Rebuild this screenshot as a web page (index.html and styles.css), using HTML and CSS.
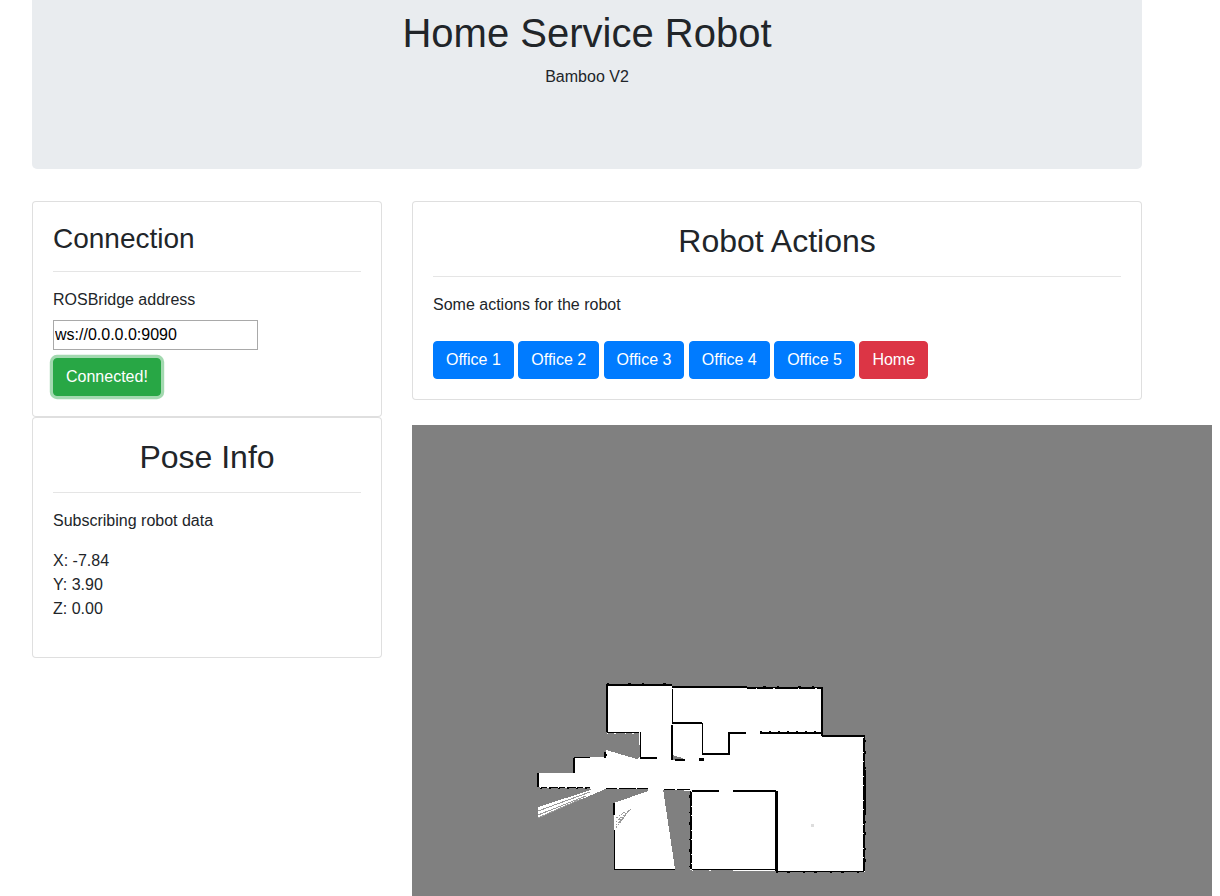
FILE: index.html
```html
<!DOCTYPE html>
<html>
<head>
<meta charset="utf-8">
<title>Home Service Robot</title>
<link rel="stylesheet" href="styles.css">
</head>
<body>
<div class="page">
  <header class="jumbotron">
    <h1>Home Service Robot</h1>
    <p>Bamboo V2</p>
  </header>
  <div class="row">
    <div class="leftCol">
      <section class="card connection">
        <h3>Connection</h3>
        <hr>
        <label for="address">ROSBridge address</label>
        <input id="address" type="text" value="ws://0.0.0.0:9090">
        <button class="btn btnGreen">Connected!</button>
      </section>
      <section class="card pose">
        <h3 class="large center">Pose Info</h3>
        <hr>
        <p>Subscribing robot data</p>
        <div class="coords">
          <div>X: -7.84</div>
          <div>Y: 3.90</div>
          <div>Z: 0.00</div>
        </div>
      </section>
    </div>
    <div class="rightCol">
      <section class="card actions">
        <h3 class="large center">Robot Actions</h3>
        <hr>
        <p>Some actions for the robot</p>
        <div class="buttons">
          <button class="btn btnBlue">Office 1</button>
          <button class="btn btnBlue">Office 2</button>
          <button class="btn btnBlue">Office 3</button>
          <button class="btn btnBlue">Office 4</button>
          <button class="btn btnBlue">Office 5</button>
          <button class="btn btnRed">Home</button>
        </div>
      </section>
      <div class="mapBox">
        <svg class="map" width="800" height="471" viewBox="412 425 800 471" shape-rendering="crispEdges">
          <!-- free space -->
          <path fill="#fff" d="M607 684 L672 684 L672 686 L822 687 L822 736 L865 736 L865 872 L776 871 L690 870 L691 791 L663 789 L675 869 L614 869 L614 803 L648 791 L648 789 L605 788 L603 790 L538 818 L538 807 L591 790 L590 787 L538 787 L537 773 L573 773 L573 758 L605 757 L606 750 L637 759 L640 757 L639 732 L607 732 Z"/>
          <!-- unknown patch inside the small room -->
          <path fill="#808080" d="M672 755 L683 758 L683 760 L672 760 Z"/>
          <path fill="#808080" d="M640 757 L657 757 L657 759 L640 759 Z"/>
          <!-- laser streaks -->
          <g fill="none" stroke="#9a9a9a" stroke-width="1">
            <path d="M538 811 L590 792 M538 815 L586 796 M538 818 L581 799"/>
            <path stroke-dasharray="2 1" d="M616 822 L632 808 M616 825 L630 810 M616 828 L627 813 M616 818 L625 812"/>
          </g>
          <!-- walls -->
          <g fill="none" stroke="#000" stroke-width="1">
            <path d="M607 732 L639 732 M640 732 L640 757"/>
            <path d="M672 686 L672 722"/>
            <path d="M702 723 L702 753"/>
            <path d="M614 830 L614 869 L675 869"/>
            <path d="M692 869 L776 869"/>
            <path d="M540 787 L590 787 M574 757 L590 757 M605 788 L648 788 M663 789 L690 789"/>
            <path d="M776 871 L864 871"/>
          </g>
          <g fill="none" stroke="#000" stroke-width="2">
            <path d="M607 685 L672 685"/>
            <path d="M607 684 L607 732"/>
            <path d="M672 687 L822 688 L822 736"/>
            <path d="M672 723 L702 723"/>
            <path d="M702 754 L729 754 L729 733 L746 733 M760 733 L822 733"/>
            <path d="M672 725 L672 760"/>
            <path d="M640 758 L657 758 M675 760 L685 760 M604 755 L607 755"/>
            <path d="M822 736 L864 736 L864 871"/>
            <path d="M691 791 L691 869 M692 791 L719 791 M733 791 L776 791"/>
            <path d="M574 758 L574 773 M538 773 L538 787 M614 803 L614 815 M605 752 L605 758"/>
          </g>
          <g fill="none" stroke="#000" stroke-width="3">
            <path d="M776 791 L776 871"/>
            <path d="M864 770 L864 815"/>
            <path d="M699 759 L704 759"/>
          </g>
          <!-- speckled wall edges -->
          <g fill="none" stroke="#fff" stroke-width="1">
            <path stroke-dasharray="1 6 2 9" d="M607 733 L639 733 M540 787 L590 787"/>
            <path stroke-dasharray="1 11 2 17" d="M605 788 L648 788 M663 789 L690 789"/>
            <path stroke-dasharray="1 16 2 23" d="M692 870 L776 870 M672 688 L822 689"/>
            <path stroke-dasharray="1 14 1 8" d="M863 737 L863 871 M691 791 L691 869"/>
            <path stroke-dasharray="1 9" d="M692 792 L719 792 M733 792 L776 792 M760 734 L822 734"/>
          </g>
          <g fill="none" stroke="#000" stroke-width="1">
            <path stroke-dasharray="2 19 3 11" d="M607 683 L672 683 M672 686 L822 686"/>
            <path stroke-dasharray="3 14 1 9" d="M606 690 L606 730 M689 795 L689 868"/>
            <path stroke-dasharray="2 9 3 13" d="M776 872 L864 872 M865 740 L865 870"/>
            <path stroke-dasharray="2 7" d="M540 788 L590 788 M760 731 L822 731"/>
          </g>
          <rect x="811" y="824" width="3" height="3" fill="#ddd"/>
        </svg>
      </div>
    </div>
  </div>
</div>
</body>
</html>
```

FILE: styles.css
```css
html, body {
    margin: 0;
    padding: 0;
}
body {
    font-family: "Liberation Sans", Arial, sans-serif;
    font-size: 16px;
    line-height: 1.5;
    color: #212529;
    background: #fff;
    overflow: hidden;
}
.page {
    width: 1110px;
    height: 896px;
    margin-left: 32px;
}
.jumbotron {
    height: 169px;
    padding-top: 9px;
    box-sizing: border-box;
    background: #e9ecef;
    border-radius: 0 0 5px 5px;
    text-align: center;
    margin-bottom: 32px;
}
h1 {
    margin: 0 0 8px;
    font-size: 40px;
    font-weight: 400;
    line-height: 1.2;
}
.jumbotron p {
    margin: 0;
}
.row {
    display: flex;
    gap: 30px;
}
.leftCol {
    width: 350px;
}
.rightCol {
    width: 730px;
}
.card {
    border: 1px solid rgba(0, 0, 0, .125);
    border-radius: 4px;
    padding: 20px;
    background: #fff;
    box-sizing: border-box;
}
h3 {
    margin: 0;
    font-size: 28px;
    font-weight: 400;
    line-height: 33px;
}
h3.large {
    font-size: 32px;
    line-height: 38px;
}
.center {
    text-align: center;
}
hr {
    border: 0;
    border-top: 1px solid rgba(0, 0, 0, .1);
    margin: 16px 0;
}
p {
    margin: 0 0 16px;
}
label {
    display: block;
    margin-bottom: 8px;
}
input {
    display: block;
    width: 205px;
    height: 30px;
    box-sizing: border-box;
    font-family: inherit;
    font-size: 16px;
    padding: 1px;
    border: 1px solid #a9a9a9;
    margin-bottom: 8px;
    color: #000;
}
.btn {
    font-family: inherit;
    font-size: 16px;
    line-height: 24px;
    padding: 6px 12px;
    border: 1px solid transparent;
    border-radius: 4px;
    color: #fff;
}
.btnBlue { background: #007bff; border-color: #007bff; }
.btnRed { background: #dc3545; border-color: #dc3545; }
.btnGreen {
    display: block;
    background: #28a745;
    border-color: #28a745;
    box-shadow: 0 0 0 3.2px rgba(72, 180, 97, .5);
}
.connection {
    height: 216px;
}
.pose {
    height: 241px;
}
.coords {
    margin-top: 16px;
}
.actions {
    height: 199px;
}
.buttons {
    display: flex;
    gap: 4.45px;
    margin-top: 24px;
}
.mapBox {
    margin-top: 25px;
    width: 800px;
    height: 471px;
    background: #808080;
}
.map {
    display: block;
}
```
